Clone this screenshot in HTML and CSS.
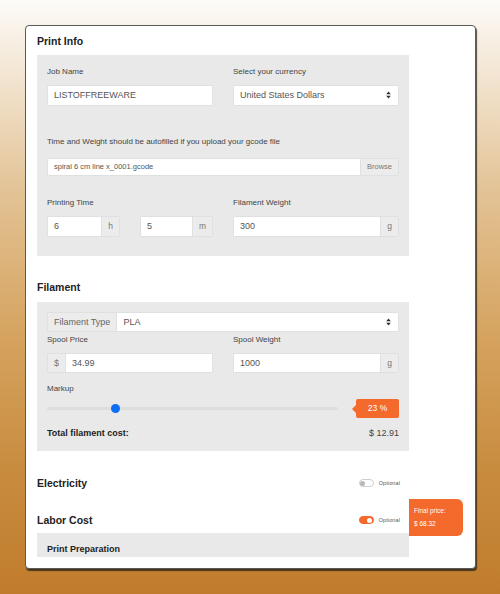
FILE: index.html
```html
<!DOCTYPE html>
<html>
<head>
<meta charset="utf-8">
<link rel="stylesheet" href="styles.css">
</head>
<body>
<div class="card">
  <div class="scroll">
    <h2 class="h first">Print Info</h2>
    <div class="panel p1">
      <div class="grid2">
        <div>
          <div class="label">Job Name</div>
          <div class="field"><div class="input">LISTOFFREEWARE</div></div>
        </div>
        <div>
          <div class="label">Select your currency</div>
          <div class="field"><div class="input select">United States Dollars<span class="arrows"><svg width="5" height="8" viewBox="0 0 5 8"><path d="M2.5 0.5 L4.8 3.2 H0.2 Z M2.5 7.5 L4.8 4.8 H0.2 Z" fill="#333"/></svg></span></div></div>
        </div>
      </div>
      <div class="label note">Time and Weight should be autofilled if you upload your gcode file</div>
      <div class="field file"><div class="input">spiral 6 cm line x_0001.gcode</div><div class="addon browse">Browse</div></div>
      <div class="grid2 timerow">
        <div>
          <div class="label">Printing Time</div>
          <div class="grid2">
            <div class="field"><div class="input">6</div><div class="addon">h</div></div>
            <div class="field"><div class="input">5</div><div class="addon">m</div></div>
          </div>
        </div>
        <div>
          <div class="label">Filament Weight</div>
          <div class="field"><div class="input">300</div><div class="addon">g</div></div>
        </div>
      </div>
    </div>

    <h2 class="h fil">Filament</h2>
    <div class="panel p2">
      <div class="field type"><div class="addon left">Filament Type</div><div class="input select">PLA<span class="arrows"><svg width="5" height="8" viewBox="0 0 5 8"><path d="M2.5 0.5 L4.8 3.2 H0.2 Z M2.5 7.5 L4.8 4.8 H0.2 Z" fill="#333"/></svg></span></div></div>
      <div class="grid2 spool">
        <div>
          <div class="label">Spool Price</div>
          <div class="field f20"><div class="addon left dollar">$</div><div class="input">34.99</div></div>
        </div>
        <div>
          <div class="label">Spool Weight</div>
          <div class="field f20"><div class="input">1000</div><div class="addon">g</div></div>
        </div>
      </div>
      <div class="label markup">Markup</div>
      <div class="slider-row">
        <div class="track"><div class="thumb" style="left: 23.7%"></div></div>
        <div class="tip">23 %</div>
      </div>
      <div class="total"><span>Total filament cost:</span><span class="amount">$ 12.91</span></div>
    </div>

    <div class="toggle-row elec">
      <h2 class="h">Electricity</h2>
      <div class="opt"><span class="switch"></span><span class="opt-text">Optional</span></div>
    </div>
    <div class="toggle-row labor">
      <h2 class="h">Labor Cost</h2>
      <div class="opt"><span class="switch on"></span><span class="opt-text">Optional</span></div>
    </div>
    <div class="panel p3">
      <div class="sub">Print Preparation</div>
    </div>
  </div>
  <div class="final">
    <div>Final price:</div>
    <div class="final-val">$ 68.32</div>
  </div>
</div>
</body>
</html>
```

FILE: styles.css
```css
html, body {
  margin: 0;
  height: 594px;
}
body {
  padding: 25px 0 0 25px;
  box-sizing: border-box;
  font-family: "Liberation Sans", Arial, sans-serif;
  color: #333;
  background: linear-gradient(to bottom, #fdfbf8 0%, #f3e6d4 12%, #e3c396 32%, #d6a562 55%, #c98d40 78%, #c07c2c 100%);
  overflow: hidden;
}
.card {
  position: relative;
  width: 451px;
  height: 544px;
  box-sizing: border-box;
  background: #fff;
  border: 1px solid #5a5a5a;
  border-radius: 4px;
  box-shadow: 1px 2px 1px rgba(30, 25, 20, 0.75);
  padding: 0 66px 0 11px;
}
.scroll {
  height: 531px;
  overflow: hidden;
}
.h {
  margin: 0;
  font-size: 10.5px;
  line-height: 16px;
  font-weight: bold;
  color: #222;
}
.h.first { padding-top: 7px; }
.panel {
  background: #e9e9e9;
  padding: 0 10px;
}
.p1 { margin-top: 6px; padding-top: 11px; padding-bottom: 19px; }
.grid2 {
  display: grid;
  grid-template-columns: 1fr 1fr;
  column-gap: 20px;
}
.label {
  font-size: 8px;
  line-height: 12px;
  color: #444;
  margin-bottom: 7px;
}
.field {
  display: flex;
  height: 21px;
  border-radius: 2px;
  overflow: hidden;
  box-sizing: border-box;
  border: 1px solid #e0e0e0;
  background: #fff;
}
.input {
  flex: 1;
  min-width: 0;
  background: #fff;
  font-size: 9px;
  line-height: 19px;
  padding-left: 6px;
  color: #555;
  position: relative;
  white-space: nowrap;
}
.select { padding-right: 14px; }
.arrows {
  position: absolute;
  right: 7px;
  top: 5px;
  display: flex;
}
.addon {
  background: #ececec;
  border-left: 1px solid #e0e0e0;
  font-size: 8.5px;
  line-height: 19px;
  color: #777;
  padding: 0 6px;
}
.addon.left {
  border-left: none;
  border-right: 1px solid #e0e0e0;
}
.note { margin-top: 30px; margin-bottom: 10px; }
.file { height: 18px; }
.file .input { font-size: 7.5px; line-height: 16px; }
.browse { font-size: 7.5px; line-height: 16px; padding: 0 6px; }
.timerow { margin-top: 21px; }
.fil { margin-top: 23px; }
.p2 { margin-top: 7px; padding-top: 10px; padding-bottom: 12px; }
.type, .f20 { height: 20px; }
.type .addon { font-size: 9px; line-height: 18px; padding: 0 6px; color: #666; }
.type .input { line-height: 18px; }
.f20 .input, .f20 .addon { line-height: 18px; }
.dollar { padding: 0 6px; font-size: 9px; }
.spool { margin-top: 2px; }
.markup { margin-top: 10px; margin-bottom: 4px; }
.slider-row {
  display: flex;
  align-items: center;
  height: 19px;
  gap: 18px;
}
.track {
  flex: 1;
  height: 3px;
  background: #dedede;
  border-radius: 2px;
  position: relative;
}
.thumb {
  position: absolute;
  top: -3px;
  width: 9px;
  height: 9px;
  margin-left: -4.5px;
  border-radius: 50%;
  background: #0b6ef4;
}
.tip {
  position: relative;
  width: 43px;
  height: 19px;
  background: #f4692c;
  color: #fff;
  font-size: 8.5px;
  line-height: 19px;
  text-align: center;
  border-radius: 2px;
}
.tip::before {
  content: "";
  position: absolute;
  left: -4px;
  top: 5.5px;
  border-top: 4px solid transparent;
  border-bottom: 4px solid transparent;
  border-right: 4px solid #f4692c;
}
.total {
  display: flex;
  justify-content: space-between;
  margin-top: 9px;
  font-size: 9px;
  line-height: 12px;
}
.total span:first-child { font-weight: bold; color: #222; }
.amount { color: #444; }
.toggle-row {
  display: flex;
  justify-content: space-between;
  align-items: center;
  padding-right: 9px;
}
.elec { margin-top: 24px; }
.labor { margin-top: 21px; }
.opt { display: flex; align-items: center; gap: 5px; }
.switch {
  position: relative;
  width: 15px;
  height: 8px;
  box-sizing: border-box;
  border-radius: 4px;
  border: 1px solid #cfcfcf;
  background: #fff;
}
.switch::after {
  content: "";
  position: absolute;
  left: 0.5px;
  top: 0.5px;
  width: 5px;
  height: 5px;
  border-radius: 50%;
  background: #b8b8b8;
}
.switch.on { background: #f4692c; border-color: #f4692c; }
.switch.on::after { left: auto; right: 0.5px; background: #fff; }
.opt-text { font-size: 5.5px; color: #555; letter-spacing: 0.1px; }
.p3 { margin-top: 5px; padding-top: 10px; height: 40px; }
.sub { font-size: 9px; line-height: 12px; font-weight: bold; color: #222; }
.final {
  position: absolute;
  left: 383px;
  top: 473px;
  width: 54px;
  height: 37px;
  box-sizing: border-box;
  background: #f4692c;
  color: #fff;
  border-radius: 0 6px 6px 0;
  padding: 5px 0 0 5px;
  font-size: 6.5px;
  line-height: 13px;
}
```
